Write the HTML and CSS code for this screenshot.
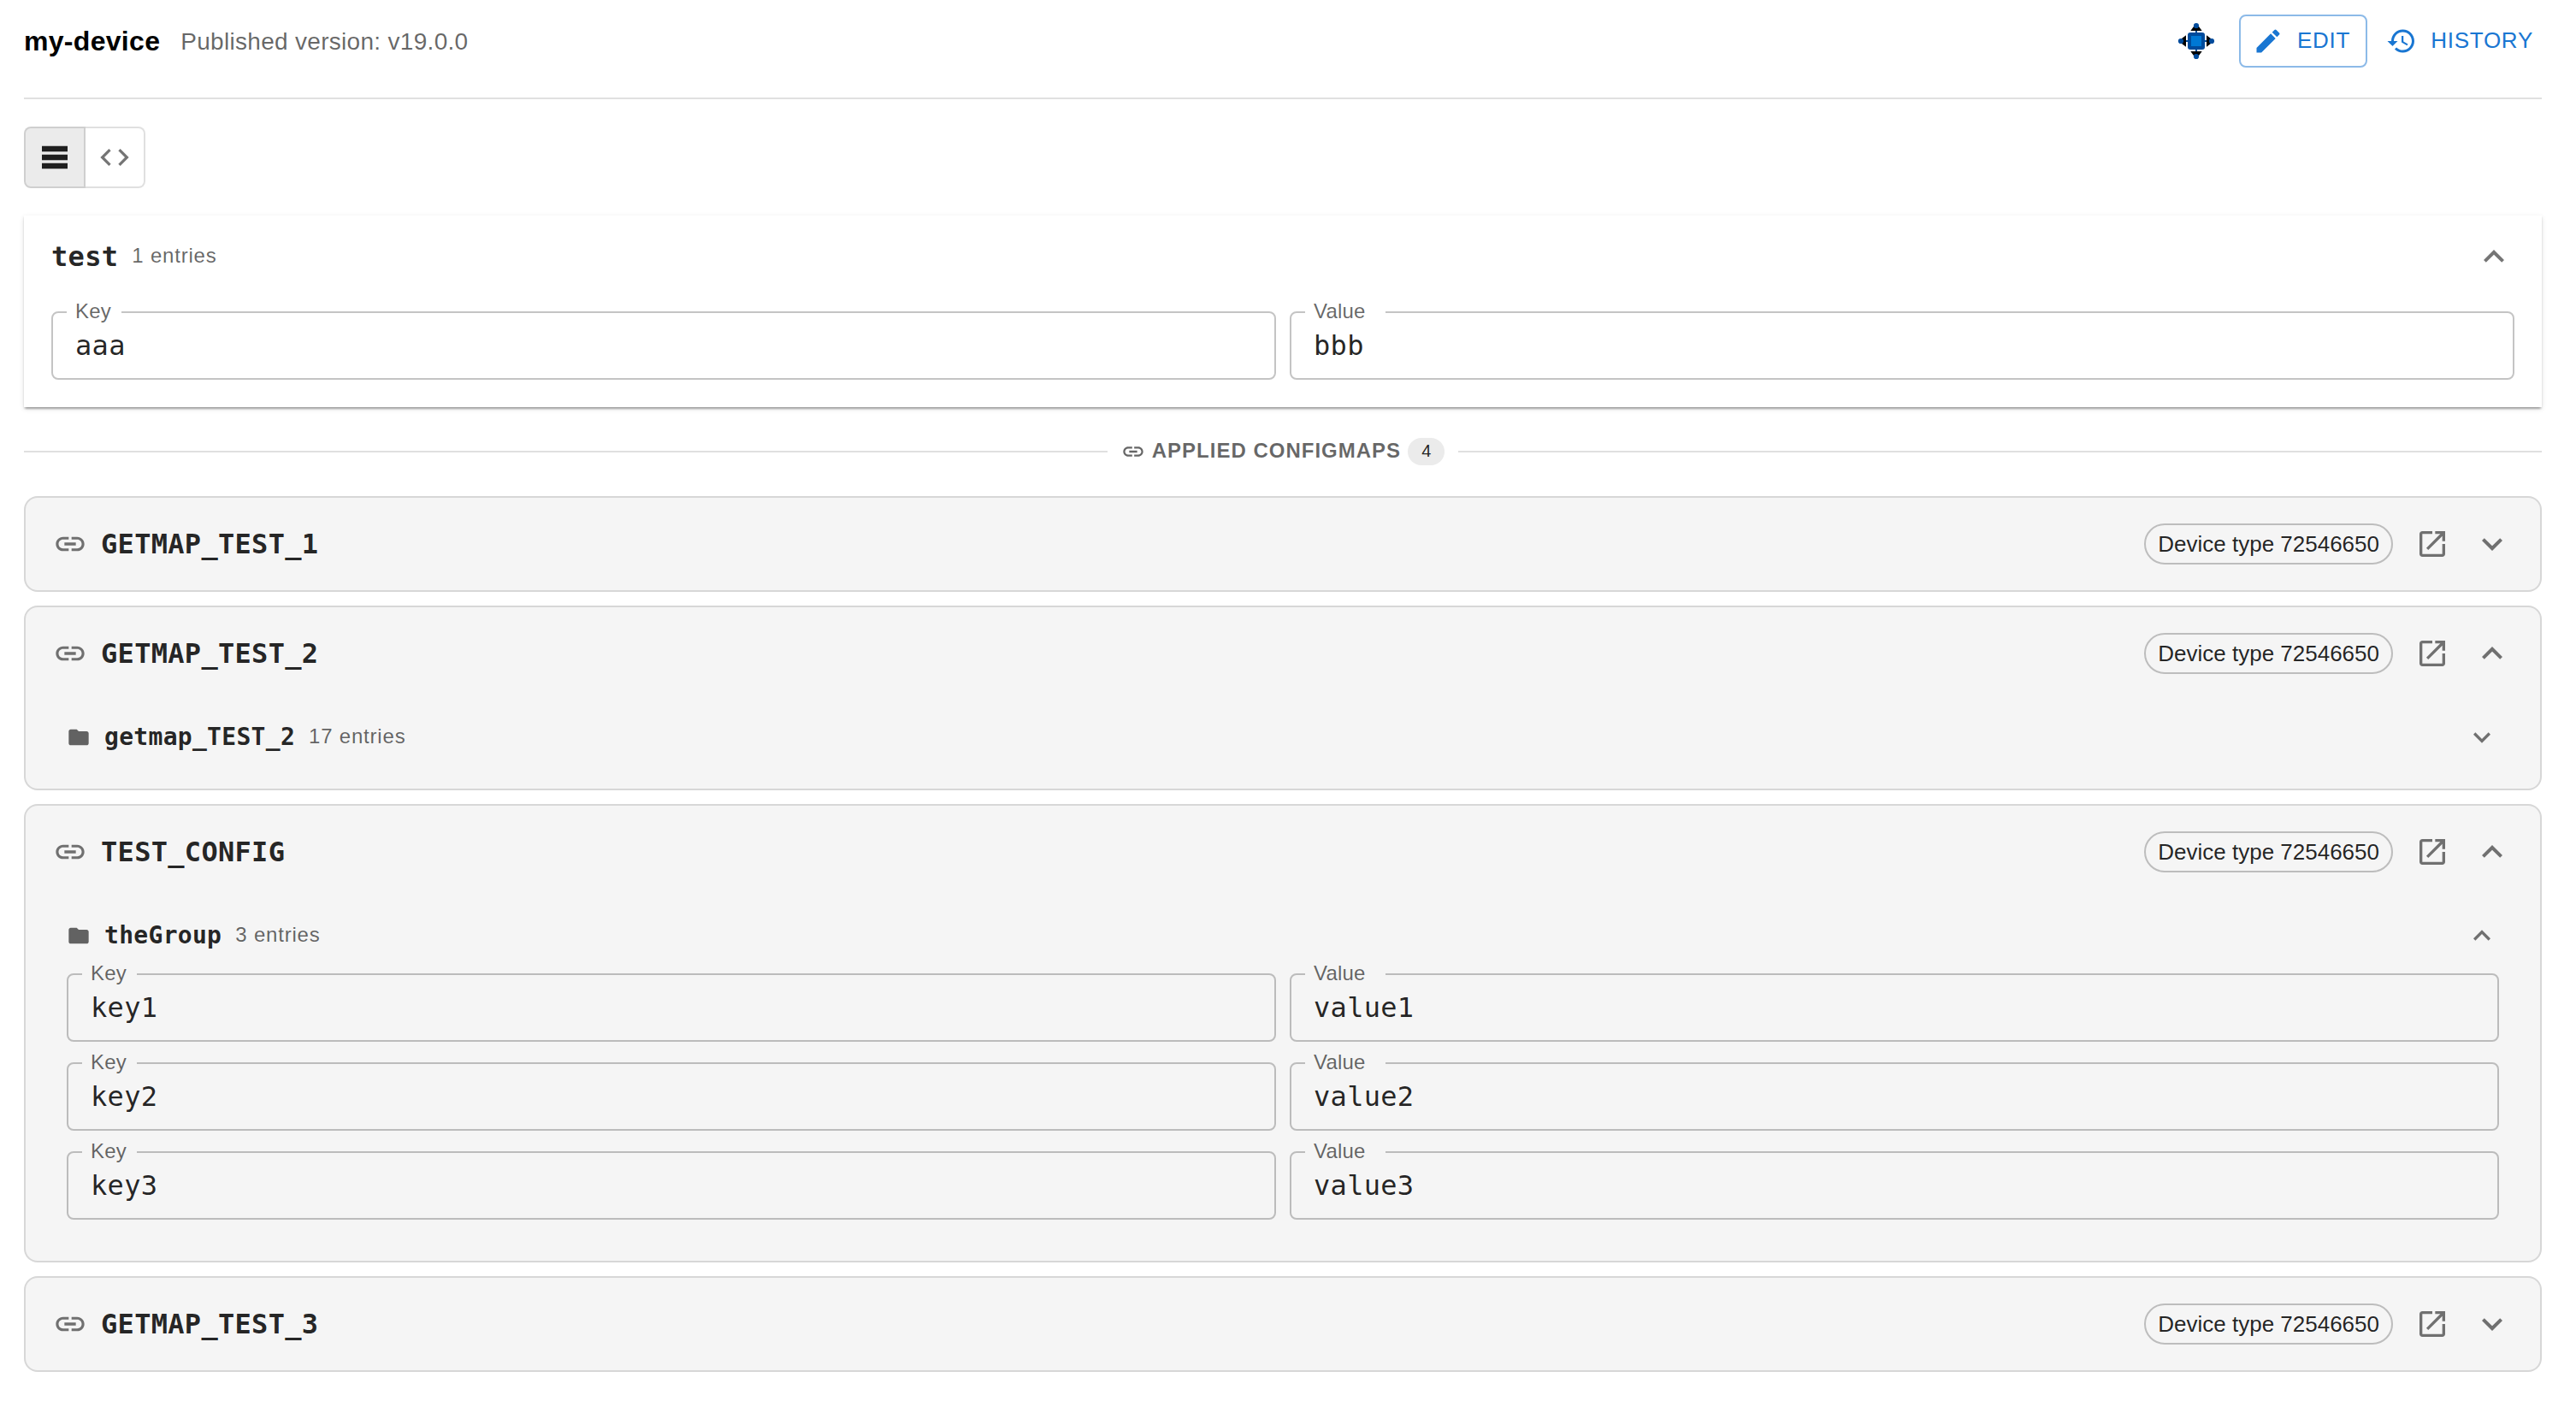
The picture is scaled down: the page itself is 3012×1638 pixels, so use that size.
FILE: index.html
```html
<!DOCTYPE html>
<html lang="en">
<head>
    <meta charset="UTF-8">
    <meta name="viewport" content="width=device-width, initial-scale=1.0">
    <title>my-device</title>
    <link rel="stylesheet" href="styles.css">
</head>
<body>
    <svg class="sprite" aria-hidden="true">
        <symbol id="link" viewBox="0 0 24 24"><path d="M3.9 12c0-1.71 1.39-3.1 3.1-3.1h4V7H7c-2.76 0-5 2.24-5 5s2.24 5 5 5h4v-1.9H7c-1.71 0-3.1-1.39-3.1-3.1zM8 13h8v-2H8v2zm9-6h-4v1.9h4c1.71 0 3.1 1.39 3.1 3.1s-1.39 3.1-3.1 3.1h-4V17h4c2.76 0 5-2.24 5-5s-2.24-5-5-5z"/></symbol>
        <symbol id="expand" viewBox="0 0 24 24"><path d="M16.59 8.59 12 13.17 7.41 8.59 6 10l6 6 6-6z"/></symbol>
        <symbol id="collapse" viewBox="0 0 24 24"><path d="m12 8-6 6 1.41 1.41L12 10.83l4.59 4.58L18 14z"/></symbol>
        <symbol id="open" viewBox="0 0 24 24"><path d="M19 19H5V5h7V3H5c-1.11 0-2 .9-2 2v14c0 1.1.89 2 2 2h14c1.1 0 2-.9 2-2v-7h-2v7zM14 3v2h3.59l-9.83 9.83 1.41 1.41L19 6.41V10h2V3h-7z"/></symbol>
        <symbol id="folder" viewBox="0 0 24 24"><path d="M10 4H4c-1.1 0-1.99.9-1.99 2L2 18c0 1.1.9 2 2 2h16c1.1 0 2-.9 2-2V8c0-1.1-.9-2-2-2h-8l-2-2z"/></symbol>
    </svg>

    <div class="page">
        <header class="header">
            <h1 class="device-name">my-device</h1>
            <span class="version">Published version: v19.0.0</span>
            <div class="actions">
                <span class="icon-button">
                    <svg class="hub-icon" viewBox="0 0 48 48">
                        <path d="M24 6v36M6 24h36" stroke="#004b9c" stroke-width="2"/>
                        <path d="M21 7h6l3.7 5H17.3zM21 41h6l3.7-5H17.3zM7 21v6l5 3.7V17.3zM41 21v6l-5 3.7V17.3z" fill="#000"/>
                        <circle cx="24" cy="6" r="3.1"/>
                        <circle cx="24" cy="42" r="3.1"/>
                        <circle cx="6" cy="24" r="3.1"/>
                        <circle cx="42" cy="24" r="3.1"/>
                        <rect x="14" y="14" width="20" height="20" rx="3"/>
                        <rect x="18" y="18" width="12" height="12" fill="#0078d4"/>
                    </svg>
                </span>
                <button class="button outlined">
                    <svg class="icon" viewBox="0 0 24 24"><path d="M3 17.25V21h3.75L17.81 9.94l-3.75-3.75L3 17.25zM20.71 7.04c.39-.39.39-1.02 0-1.41l-2.34-2.34a.9959.9959 0 0 0-1.41 0l-1.83 1.83 3.75 3.75 1.83-1.83z"/></svg>
                    <span class="button-text">Edit</span>
                </button>
                <button class="button">
                    <svg class="icon" viewBox="0 0 24 24"><path d="M13 3c-4.97 0-9 4.03-9 9H1l3.89 3.89.07.14L9 12H6c0-3.87 3.13-7 7-7s7 3.13 7 7-3.13 7-7 7c-1.93 0-3.68-.79-4.94-2.06l-1.42 1.42C8.27 19.99 10.51 21 13 21c4.97 0 9-4.03 9-9s-4.03-9-9-9zm-1 5v5l4.28 2.54.72-1.21-3.5-2.08V8H12z"/></svg>
                    <span class="button-text">History</span>
                </button>
            </div>
        </header>

        <div class="view-toggle">
            <button class="toggle selected"><svg class="icon" viewBox="0 0 24 24"><path d="M21 8H3V4h18v4zm0 2H3v4h18v-4zm0 6H3v4h18v-4z"/></svg></button>
            <button class="toggle"><svg class="icon" viewBox="0 0 24 24"><path d="M9.4 16.6 4.8 12l4.6-4.6L8 6l-6 6 6 6 1.4-1.4zm5.2 0 4.6-4.6-4.6-4.6L16 6l6 6-6 6-1.4-1.4z"/></svg></button>
        </div>

        <section class="group-card">
            <div class="card-title-row">
                <span class="card-title">test</span>
                <span class="count">1 entries</span>
                <svg class="icon chevron large"><use href="#collapse"/></svg>
            </div>
            <div class="entries">
                <fieldset class="field"><legend class="key-label">Key</legend><div class="field-text">aaa</div></fieldset>
                <fieldset class="field"><legend class="value-label">Value</legend><div class="field-text">bbb</div></fieldset>
            </div>
        </section>

        <div class="divider">
            <svg class="icon small"><use href="#link"/></svg>
            <span class="divider-text">Applied ConfigMaps</span>
            <span class="badge">4</span>
        </div>

        <div class="configmaps">
            <section class="configmap">
                <div class="configmap-header">
                    <svg class="icon"><use href="#link"/></svg>
                    <span class="card-title">GETMAP_TEST_1</span>
                    <span class="chip">Device type 72546650</span>
                    <span class="icon-button"><svg class="icon"><use href="#open"/></svg></span>
                    <svg class="icon large"><use href="#expand"/></svg>
                </div>
            </section>

            <section class="configmap">
                <div class="configmap-header">
                    <svg class="icon"><use href="#link"/></svg>
                    <span class="card-title">GETMAP_TEST_2</span>
                    <span class="chip">Device type 72546650</span>
                    <span class="icon-button"><svg class="icon"><use href="#open"/></svg></span>
                    <svg class="icon large"><use href="#collapse"/></svg>
                </div>
                <div class="configmap-body">
                    <div class="group-row">
                        <svg class="icon small folder"><use href="#folder"/></svg>
                        <span class="group-name">getmap_TEST_2</span>
                        <span class="count">17 entries</span>
                        <svg class="icon chevron"><use href="#expand"/></svg>
                    </div>
                </div>
            </section>

            <section class="configmap">
                <div class="configmap-header">
                    <svg class="icon"><use href="#link"/></svg>
                    <span class="card-title">TEST_CONFIG</span>
                    <span class="chip">Device type 72546650</span>
                    <span class="icon-button"><svg class="icon"><use href="#open"/></svg></span>
                    <svg class="icon large"><use href="#collapse"/></svg>
                </div>
                <div class="configmap-body">
                    <div class="group-row">
                        <svg class="icon small folder"><use href="#folder"/></svg>
                        <span class="group-name">theGroup</span>
                        <span class="count">3 entries</span>
                        <svg class="icon chevron"><use href="#collapse"/></svg>
                    </div>
                    <div class="entries">
                        <fieldset class="field"><legend class="key-label">Key</legend><div class="field-text">key1</div></fieldset>
                        <fieldset class="field"><legend class="value-label">Value</legend><div class="field-text">value1</div></fieldset>
                        <fieldset class="field"><legend class="key-label">Key</legend><div class="field-text">key2</div></fieldset>
                        <fieldset class="field"><legend class="value-label">Value</legend><div class="field-text">value2</div></fieldset>
                        <fieldset class="field"><legend class="key-label">Key</legend><div class="field-text">key3</div></fieldset>
                        <fieldset class="field"><legend class="value-label">Value</legend><div class="field-text">value3</div></fieldset>
                    </div>
                </div>
            </section>

            <section class="configmap">
                <div class="configmap-header">
                    <svg class="icon"><use href="#link"/></svg>
                    <span class="card-title">GETMAP_TEST_3</span>
                    <span class="chip">Device type 72546650</span>
                    <span class="icon-button"><svg class="icon"><use href="#open"/></svg></span>
                    <svg class="icon large"><use href="#expand"/></svg>
                </div>
            </section>
        </div>
    </div>
</body>
</html>
```
FILE: styles.css
```css
* {
    box-sizing: border-box;
}
body {
    margin: 0;
    background: #fff;
    color: rgba(0, 0, 0, 0.87);
    font-family: "Liberation Sans", Arial, sans-serif;
}
.sprite {
    display: none;
}
.page {
    padding: 0 40px 0 28px;
}
.icon {
    display: block;
    flex: none;
    width: 40px;
    height: 40px;
    fill: currentColor;
    color: rgba(0, 0, 0, 0.54);
}
.icon.small {
    width: 28px;
    height: 28px;
    color: rgba(0, 0, 0, 0.6);
}
.icon.large {
    width: 48px;
    height: 48px;
}
.chevron {
    margin-left: auto;
}

/* header */
.header {
    display: flex;
    align-items: center;
    height: 116px;
    padding-bottom: 18px;
    border-bottom: 2px solid #e0e0e0;
}
.device-name {
    margin: 0 24px 0 0;
    color: #000;
    font-size: 32px;
    font-weight: bold;
    letter-spacing: 0.3px;
}
.version {
    padding-top: 1px;
    color: rgba(0, 0, 0, 0.6);
    font-size: 28px;
    letter-spacing: 0.3px;
}
.actions {
    display: flex;
    align-items: center;
    gap: 16px;
    margin-left: auto;
}
.icon-button {
    padding: 10px;
}
.hub-icon {
    display: block;
    width: 48px;
    height: 48px;
    fill: #004b9c;
}
.button {
    display: flex;
    align-items: center;
    height: 62px;
    padding: 0 10px;
    border: none;
    border-radius: 8px;
    background: none;
    color: #1976d2;
    font-family: inherit;
    font-size: 26px;
    letter-spacing: 0.74px;
    text-transform: uppercase;
}
.button.outlined {
    padding: 0 18px;
    border: 2px solid rgba(25, 118, 210, 0.5);
}
.button .icon {
    width: 36px;
    height: 36px;
    margin: 0 16px 0 -4px;
    color: inherit;
}
.button-text {
    padding-bottom: 2px;
}

/* list / code switch */
.view-toggle {
    display: flex;
    margin: 32px 0;
}
.toggle {
    padding: 14px;
    border: 2px solid rgba(0, 0, 0, 0.12);
    border-left: none;
    border-radius: 0 8px 8px 0;
    background: none;
}
.toggle.selected {
    border-left: 2px solid rgba(0, 0, 0, 0.12);
    border-radius: 8px 0 0 8px;
    background: rgba(0, 0, 0, 0.08);
}
.toggle.selected .icon {
    color: rgba(0, 0, 0, 0.87);
}

/* device's own group */
.group-card {
    padding: 24px 32px 32px;
    background: #fff;
    box-shadow: 0 4px 2px -2px rgba(0, 0, 0, 0.2), 0 2px 2px rgba(0, 0, 0, 0.14), 0 2px 6px rgba(0, 0, 0, 0.12);
}
.card-title-row {
    display: flex;
    align-items: center;
    gap: 16px;
    height: 48px;
    margin-bottom: 40px;
}
.card-title {
    font-family: "DejaVu Sans Mono", monospace;
    font-size: 32px;
    font-weight: bold;
    line-height: 48px;
    letter-spacing: 0.3px;
}
.count {
    padding-bottom: 2px;
    color: rgba(0, 0, 0, 0.6);
    font-size: 24px;
    line-height: 38px;
    letter-spacing: 0.8px;
}

/* key / value fields */
.entries {
    display: grid;
    grid-template-columns: 1fr 1fr;
    gap: 24px 16px;
}
.field {
    min-width: 0;
    height: 90px;
    margin: -10px 0 0;
    padding: 0 16px;
    border: 2px solid rgba(0, 0, 0, 0.23);
    border-radius: 8px;
}
.field legend {
    padding: 0 0 2px 10px;
    color: rgba(0, 0, 0, 0.6);
    font-size: 24px;
    line-height: 20px;
    letter-spacing: 0.2px;
}
.key-label {
    width: 64px;
}
.value-label {
    width: 94px;
}
.field-text {
    padding: 5px 10px 0;
    font-family: "DejaVu Sans Mono", monospace;
    font-size: 32px;
    line-height: 46px;
    letter-spacing: 0.3px;
}

/* section divider */
.divider {
    display: flex;
    align-items: center;
    gap: 8px;
    height: 32px;
    margin: 36px 0;
}
.divider::before,
.divider::after {
    content: "";
    flex: 1;
    height: 2px;
    background: #e0e0e0;
}
.divider::before {
    margin-right: 8px;
}
.divider::after {
    margin-left: 8px;
}
.divider-text {
    padding-bottom: 2px;
    color: rgba(0, 0, 0, 0.6);
    font-size: 24px;
    font-weight: bold;
    letter-spacing: 1px;
    text-transform: uppercase;
}
.badge {
    padding: 0 16px 2px;
    border-radius: 16px;
    background: #ebebeb;
    font-size: 20px;
    line-height: 30px;
}

/* applied configmaps */
.configmaps {
    display: flex;
    flex-direction: column;
    gap: 16px;
}
.configmap {
    border: 2px solid rgba(0, 0, 0, 0.12);
    border-radius: 16px;
    background: #f5f5f5;
}
.configmap-header {
    display: flex;
    align-items: center;
    gap: 16px;
    padding: 24px 32px;
}
.chip {
    margin-left: auto;
    padding: 0 14px;
    border: 2px solid #bdbdbd;
    border-radius: 24px;
    font-size: 26px;
    line-height: 44px;
}
.configmap-body {
    padding: 24px 48px 40px;
}
.group-row {
    display: flex;
    align-items: center;
    gap: 16px;
    height: 40px;
}
.group-name {
    padding-bottom: 1px;
    font-family: "DejaVu Sans Mono", monospace;
    font-size: 28px;
    font-weight: bold;
    letter-spacing: 0.3px;
}
.configmap-body .entries {
    margin: 24px 0 8px;
}
```
